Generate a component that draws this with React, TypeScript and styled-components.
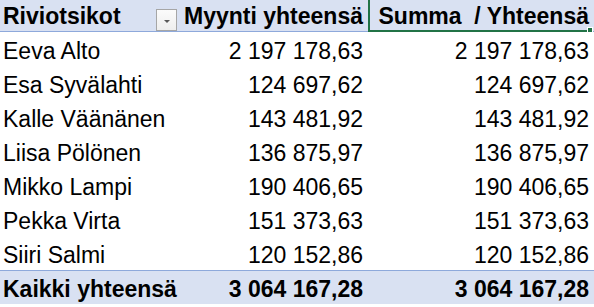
import React from 'react';
import styled, { createGlobalStyle } from 'styled-components';

const GlobalStyle = createGlobalStyle`
  html, body {
    margin: 0;
    padding: 0;
    background: #ffffff;
  }
  body {
    font-family: "Liberation Sans", Arial, sans-serif;
    color: #000000;
  }
`;

const Sheet = styled.div`
  width: 594px;
  height: 307px;
  overflow: hidden;
  display: grid;
  grid-template-columns: 180px 188px 226px;
  grid-template-rows: 32px;
  grid-auto-rows: 34px;
  font-size: 23px;
`;

const Cell = styled.div<{ $align?: 'left' | 'right'; $kind?: 'head' | 'total' | 'body' }>`
  position: relative;
  display: flex;
  align-items: flex-end;
  justify-content: ${(p) => (p.$align === 'right' ? 'flex-end' : 'flex-start')};
  padding: 0 5px 3px 3px;
  box-sizing: border-box;
  white-space: pre;
  line-height: 1;
  font-weight: ${(p) => (p.$kind === 'body' ? 400 : 700)};
  background: ${(p) => (p.$kind === 'body' ? '#ffffff' : '#d9e1f2')};
  border-bottom: ${(p) => (p.$kind === 'head' ? '1px solid #8ea9db' : 'none')};
  border-top: ${(p) => (p.$kind === 'total' ? '1px solid #8ea9db' : 'none')};
`;

const FilterButton = styled.div`
  position: absolute;
  left: 156px;
  top: 9px;
  width: 21px;
  height: 22px;
  box-sizing: border-box;
  border: 1px solid #a6a6a6;
  background: linear-gradient(#fbfbfb, #eeeeee);
  display: flex;
  align-items: center;
  justify-content: center;

  &::after {
    content: '';
    width: 0;
    height: 0;
    border-left: 3px solid transparent;
    border-right: 3px solid transparent;
    border-top: 3px solid #595959;
    margin-top: 2px;
  }
`;

const Selection = styled.div`
  position: absolute;
  left: 0;
  top: -2px;
  right: 4px;
  bottom: -1px;
  border-left: 2px solid #217346;
  border-bottom: 2px solid #217346;
  pointer-events: none;
`;

const FillHandle = styled.div`
  position: absolute;
  right: 1px;
  bottom: -2px;
  width: 4px;
  height: 4px;
  background: #217346;
  border: 1px solid #ffffff;
`;

const rows: [string, string][] = [
  ['Eeva Alto', '2 197 178,63'],
  ['Esa Syvälahti', '124 697,62'],
  ['Kalle Väänänen', '143 481,92'],
  ['Liisa Pölönen', '136 875,97'],
  ['Mikko Lampi', '190 406,65'],
  ['Pekka Virta', '151 373,63'],
  ['Siiri Salmi', '120 152,86'],
];

const App = () => {
  return (
    <>
      <GlobalStyle />
      <Sheet>
        <Cell $kind="head">
          Riviotsikot
          <FilterButton />
        </Cell>
        <Cell $kind="head" $align="right">
          Myynti yhteensä
        </Cell>
        <Cell $kind="head" $align="right">
          {'Summa  / Yhteensä'}
          <Selection />
          <FillHandle />
        </Cell>
        {rows.map(([name, value]) => (
          <React.Fragment key={name}>
            <Cell $kind="body">{name}</Cell>
            <Cell $kind="body" $align="right">
              {value}
            </Cell>
            <Cell $kind="body" $align="right">
              {value}
            </Cell>
          </React.Fragment>
        ))}
        <Cell $kind="total">Kaikki yhteensä</Cell>
        <Cell $kind="total" $align="right">
          3 064 167,28
        </Cell>
        <Cell $kind="total" $align="right">
          3 064 167,28
        </Cell>
      </Sheet>
    </>
  );
};

export default App;
